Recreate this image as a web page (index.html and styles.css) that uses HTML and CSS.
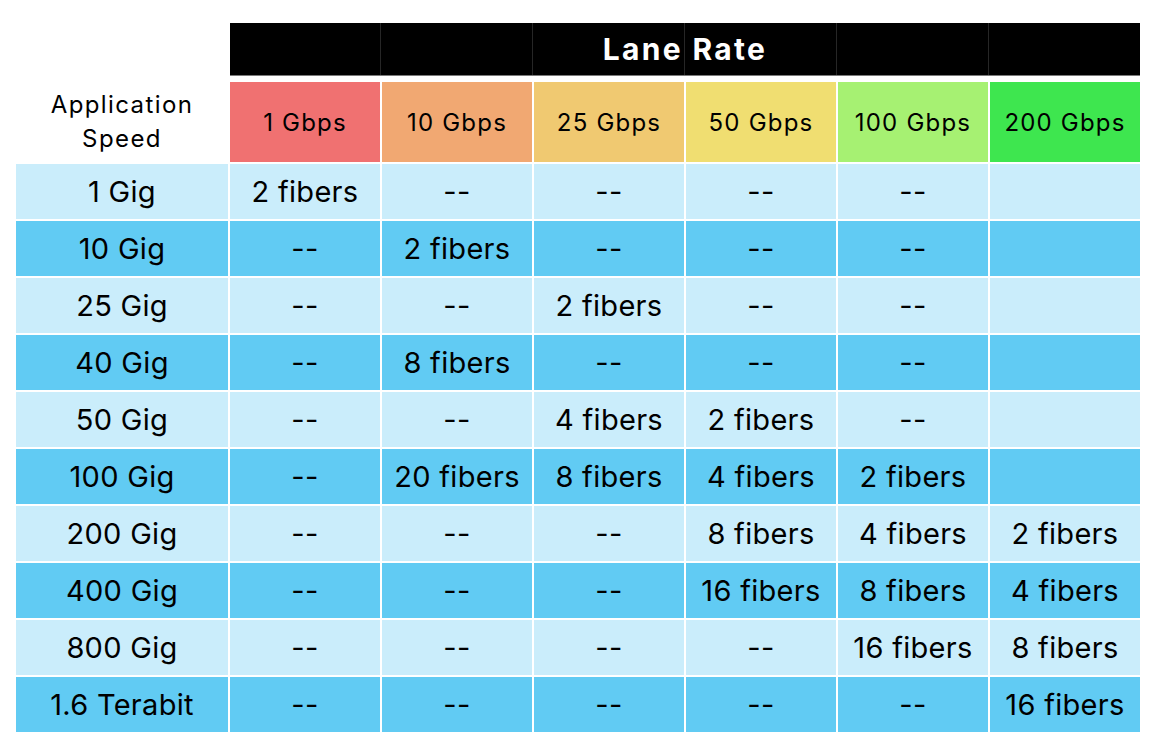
FILE: index.html
```html
<!DOCTYPE html>
<html>
<head>
<meta charset="utf-8">
<link rel="stylesheet" href="styles.css">
</head>
<body>
<div class="table">
  <div class="corner"></div>
  <div class="lane">Lane Rate</div>

  <div class="appspeed">Application<br>Speed</div>
  <div class="rate r1">1 Gbps</div>
  <div class="rate r10">10 Gbps</div>
  <div class="rate r25">25 Gbps</div>
  <div class="rate r50">50 Gbps</div>
  <div class="rate r100">100 Gbps</div>
  <div class="rate r200">200 Gbps</div>

  <div class="c l">1 Gig</div><div class="c l">2 fibers</div><div class="c l">--</div><div class="c l">--</div><div class="c l">--</div><div class="c l">--</div><div class="c l"></div>
  <div class="c d">10 Gig</div><div class="c d">--</div><div class="c d">2 fibers</div><div class="c d">--</div><div class="c d">--</div><div class="c d">--</div><div class="c d"></div>
  <div class="c l">25 Gig</div><div class="c l">--</div><div class="c l">--</div><div class="c l">2 fibers</div><div class="c l">--</div><div class="c l">--</div><div class="c l"></div>
  <div class="c d">40 Gig</div><div class="c d">--</div><div class="c d">8 fibers</div><div class="c d">--</div><div class="c d">--</div><div class="c d">--</div><div class="c d"></div>
  <div class="c l">50 Gig</div><div class="c l">--</div><div class="c l">--</div><div class="c l">4 fibers</div><div class="c l">2 fibers</div><div class="c l">--</div><div class="c l"></div>
  <div class="c d">100 Gig</div><div class="c d">--</div><div class="c d">20 fibers</div><div class="c d">8 fibers</div><div class="c d">4 fibers</div><div class="c d">2 fibers</div><div class="c d"></div>
  <div class="c l">200 Gig</div><div class="c l">--</div><div class="c l">--</div><div class="c l">--</div><div class="c l">8 fibers</div><div class="c l">4 fibers</div><div class="c l">2 fibers</div>
  <div class="c d">400 Gig</div><div class="c d">--</div><div class="c d">--</div><div class="c d">--</div><div class="c d">16 fibers</div><div class="c d">8 fibers</div><div class="c d">4 fibers</div>
  <div class="c l">800 Gig</div><div class="c l">--</div><div class="c l">--</div><div class="c l">--</div><div class="c l">--</div><div class="c l">16 fibers</div><div class="c l">8 fibers</div>
  <div class="c d">1.6 Terabit</div><div class="c d">--</div><div class="c d">--</div><div class="c d">--</div><div class="c d">--</div><div class="c d">--</div><div class="c d">16 fibers</div>
</div>
</body>
</html>
```

FILE: styles.css
```css
html, body {
  margin: 0;
  padding: 0;
  background: #ffffff;
}
body {
  font-family: Inter, "Open Sans", "Liberation Sans", sans-serif;
  color: #000;
}
.table {
  margin: 23px 0 0 16px;
  display: grid;
  grid-template-columns: 212px repeat(6, 150px);
  grid-template-rows: 57px 80px repeat(10, 55px);
  column-gap: 2px;
  row-gap: 2px;
  width: max-content;
}
.lane {
  grid-column: 2 / span 6;
  height: 52px;
  background: #000;
  border-bottom: 1px solid #7a7a7a;
  color: #fff;
  font-weight: 700;
  font-size: 30px;
  letter-spacing: 2.3px;
  display: flex;
  align-items: center;
  justify-content: center;
  background-image: linear-gradient(to right, transparent 150px, #262626 150px, #262626 151px, transparent 151px);
  background-size: 152px 100%;
}
.appspeed {
  display: flex;
  align-items: center;
  justify-content: center;
  text-align: center;
  font-size: 24px;
  letter-spacing: 1.4px;
  line-height: 34px;
}
.rate {
  display: flex;
  align-items: center;
  justify-content: center;
  font-size: 24px;
  letter-spacing: 1.2px;
}
.r1 { background: #f07171; }
.r10 { background: #f1a872; }
.r25 { background: #f0c971; }
.r50 { background: #f0de71; }
.r100 { background: #a6f172; }
.r200 { background: #3ee64f; }
.c {
  display: flex;
  align-items: center;
  justify-content: center;
  font-size: 29px;
  letter-spacing: 0.3px;
}
.l { background: #caedfb; }
.d { background: #61cbf3; }
```
